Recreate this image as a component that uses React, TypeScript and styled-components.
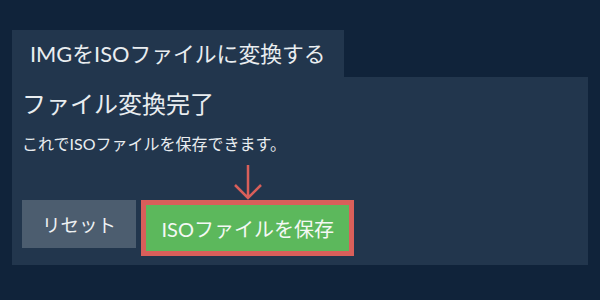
import React from 'react'
import styled, { createGlobalStyle } from 'styled-components'

const GlobalStyle = createGlobalStyle`
  html, body {
    margin: 0;
    padding: 0;
    background: #10233a;
  }
  body {
    font-family: Lato, 'Noto Sans CJK JP', sans-serif;
    color: #e9edf0;
  }
`

const Page = styled.div`
  padding: 30px 12px 0 12px;
  width: 600px;
  height: 300px;
  box-sizing: border-box;
`

const Tab = styled.div`
  display: inline-block;
  height: 47px;
  line-height: 47px;
  padding: 0 18px;
  background: #22364d;
  font-size: 21.8px;
  vertical-align: top;
`

const Panel = styled.div`
  background: #22364d;
  padding: 10px 10px 9px 10px;
`

const Heading = styled.h2`
  margin: 0;
  font-size: 24px;
  font-weight: 400;
  line-height: 34px;
`

const Message = styled.p`
  margin: 12px 0 0;
  font-size: 16px;
  line-height: 22px;
`

const Actions = styled.div`
  display: flex;
  align-items: flex-start;
  gap: 5px;
  margin-top: 45px;
`

const ResetButton = styled.button`
  height: 48px;
  padding: 0 20px;
  border: none;
  background: #4c5d6f;
  color: #eef1f3;
  font-family: inherit;
  font-size: 18.5px;
`

const SaveFrame = styled.div`
  position: relative;
  border: 5px solid #d95f5a;
`

const SaveButton = styled.button`
  display: block;
  height: 46px;
  padding: 0 15.5px;
  border: none;
  background: #5cb85c;
  color: #f4f8f4;
  font-family: inherit;
  font-size: 20px;
`

const Arrow = styled.svg`
  position: absolute;
  left: 50%;
  bottom: calc(100% + 5px);
  transform: translateX(-50%);
`

export default function App() {
  return (
    <>
      <GlobalStyle />
      <Page>
        <Tab>IMGをISOファイルに変換する</Tab>
        <Panel>
          <Heading>ファイル変換完了</Heading>
          <Message>これでISOファイルを保存できます。</Message>
          <Actions>
            <ResetButton>リセット</ResetButton>
            <SaveFrame>
              <Arrow width="32" height="36" viewBox="0 0 32 36">
                <path
                  d="M16 1 V34 M3 21 L16 34 L29 21"
                  fill="none"
                  stroke="#d95f5a"
                  strokeWidth="2.5"
                />
              </Arrow>
              <SaveButton>ISOファイルを保存</SaveButton>
            </SaveFrame>
          </Actions>
        </Panel>
      </Page>
    </>
  )
}
